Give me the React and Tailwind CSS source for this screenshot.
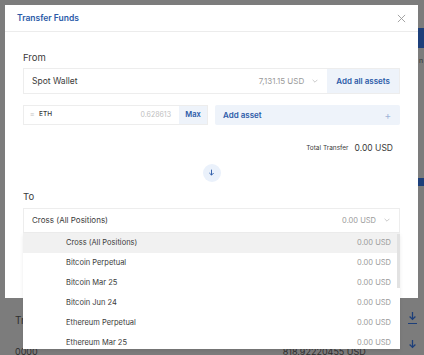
import React from 'react';

const rows = [
  { name: 'Cross (All Positions)', value: '0.00 USD', active: true },
  { name: 'Bitcoin Perpetual', value: '0.00 USD' },
  { name: 'Bitcoin Mar 25', value: '0.00 USD' },
  { name: 'Bitcoin Jun 24', value: '0.00 USD' },
  { name: 'Ethereum Perpetual', value: '0.00 USD' },
  { name: 'Ethereum Mar 25', value: '0.00 USD' },
];

function Chevron({ className }) {
  return (
    <svg viewBox="0 0 10 6" className={className} fill="none" stroke="currentColor" strokeWidth="1">
      <path d="M1 1l4 4 4-4" />
    </svg>
  );
}

function DownArrow({ className }) {
  return (
    <svg viewBox="0 0 10 12" className={className} fill="none" stroke="currentColor" strokeWidth="1.4">
      <path d="M5 1v8M1.8 6l3.2 3.2L8.2 6" />
    </svg>
  );
}

export default function App() {
  return (
    <div className="relative h-[355px] w-[424px] overflow-hidden bg-[#7c7c7c] font-['Inter',sans-serif]">
      {/* page behind the overlay */}
      <div className="absolute left-[15px] top-[313px] text-[10px] text-[#2e2e2e]">Tr</div>
      <div className="absolute left-[15px] top-[345px] flex w-[400px] text-[9px] text-[#2e2e2e]">
        <span>0000</span>
        <span className="ml-[245px]">818.92220455 USD</span>
      </div>
      <div className="absolute left-[418px] top-[28px] h-[20px] w-[6px] bg-[#1d3f7a]" />
      <div className="absolute left-[419px] top-[56px] text-[7px] text-[#333]">n</div>
      <div className="absolute left-[418px] top-[178px] h-[8px] w-[6px] bg-[#1d3f7a]" />
      <DownArrow className="absolute left-[408px] top-[311px] h-[11px] w-[9px] text-[#1d3f7a]" />
      <div className="absolute left-[408px] top-[323px] h-[1px] w-[9px] bg-[#1d3f7a]" />
      <DownArrow className="absolute left-[408px] top-[339px] h-[11px] w-[9px] text-[#1d3f7a]" />

      {/* modal */}
      <div className="absolute left-[5px] top-[5px] h-[293px] w-[413px] bg-white">
        <div className="flex h-[27px] items-center justify-between border-b border-[#ececec] pl-[12px] pr-[12px]">
          <span className="text-[8.5px] font-semibold text-[#2b5aa8]">Transfer Funds</span>
          <svg viewBox="0 0 10 10" className="h-[9px] w-[9px] text-[#9a9a9a]" fill="none" stroke="currentColor" strokeWidth="1">
            <path d="M1 1l8 8M9 1l-8 8" />
          </svg>
        </div>

        <div className="px-[18px] pt-[20px]">
          <div className="text-[9.5px] leading-[12px] text-[#3a3a3a]">From</div>
          <div className="mt-[4px] flex h-[26px] border border-[#ededed]">
            <div className="flex flex-1 items-center pl-[8px] pr-[9px]">
              <span className="text-[8.5px] text-[#3a3a3a]">Spot Wallet</span>
              <span className="ml-auto text-[8px] text-[#9a9a9a]">7,131.15 USD</span>
              <Chevron className="ml-[8px] h-[4px] w-[6px] text-[#a8a8a8]" />
            </div>
            <div className="flex items-center bg-[#eef3fa] px-[9px] text-[8px] font-semibold text-[#2b5aa8]">
              Add all assets
            </div>
          </div>

          <div className="mt-[11px] flex h-[20px] gap-[7px]">
            <div className="flex w-[185px] border border-[#ededed]">
              <div className="flex flex-1 items-center pl-[6px] pr-[8px]">
                <span className="text-[7px] text-[#c4c4c4]">≡</span>
                <span className="ml-[5px] text-[6.5px] font-medium text-[#3a3a3a]">ETH</span>
                <span className="ml-auto text-[7px] text-[#c0c0c0]">0.628613</span>
              </div>
              <div className="flex w-[28px] items-center justify-center bg-[#eef3fa] text-[7.5px] font-semibold text-[#2b5aa8]">
                Max
              </div>
            </div>
            <div className="flex flex-1 items-center justify-between rounded-[2px] bg-[#eef3fa] pl-[8px] pr-[9px]">
              <span className="text-[8px] font-semibold text-[#2b5aa8]">Add asset</span>
              <span className="text-[10px] leading-none text-[#9fb4d8]">+</span>
            </div>
          </div>

          <div className="mt-[17px] flex items-center justify-end gap-[6px] pr-[7px]">
            <span className="text-[6.5px] text-[#3a3a3a]">Total Transfer</span>
            <span className="text-[8.5px] text-[#3a3a3a]">0.00 USD</span>
          </div>

          <div className="mt-[9px] flex justify-center">
            <div className="flex h-[18px] w-[18px] items-center justify-center rounded-full bg-[#eaf1fb]">
              <DownArrow className="h-[8px] w-[7px] text-[#2b5aa8]" />
            </div>
          </div>

          <div className="mt-[9px] text-[9.5px] leading-[12px] text-[#3a3a3a]">To</div>
          <div className="relative mt-[5px]">
            <div className="flex h-[25px] items-center border border-[#ededed] pl-[8px] pr-[9px]">
              <span className="text-[8px] text-[#3a3a3a]">Cross (All Positions)</span>
              <span className="ml-auto text-[7.5px] text-[#9a9a9a]">0.00 USD</span>
              <Chevron className="ml-[8px] h-[4px] w-[6px] text-[#a8a8a8]" />
            </div>
            <div className="absolute left-0 right-0 top-[25px] z-10 h-[116px] bg-white shadow-[0_2px_4px_rgba(0,0,0,0.08)]">
              <div className="absolute right-0 top-[1px] h-[54px] w-[3px] bg-[#e2e2e2]" />
              {rows.map(r => (
                <div
                  key={r.name}
                  className={`flex h-[20px] items-center pl-[43px] pr-[9px] ${r.active ? 'bg-[#f1f1f1]' : ''}`}
                >
                  <span className="text-[7.5px] text-[#3a3a3a]">{r.name}</span>
                  <span className="ml-auto text-[7.5px] text-[#9a9a9a]">{r.value}</span>
                </div>
              ))}
            </div>
          </div>
        </div>
      </div>
    </div>
  );
}
